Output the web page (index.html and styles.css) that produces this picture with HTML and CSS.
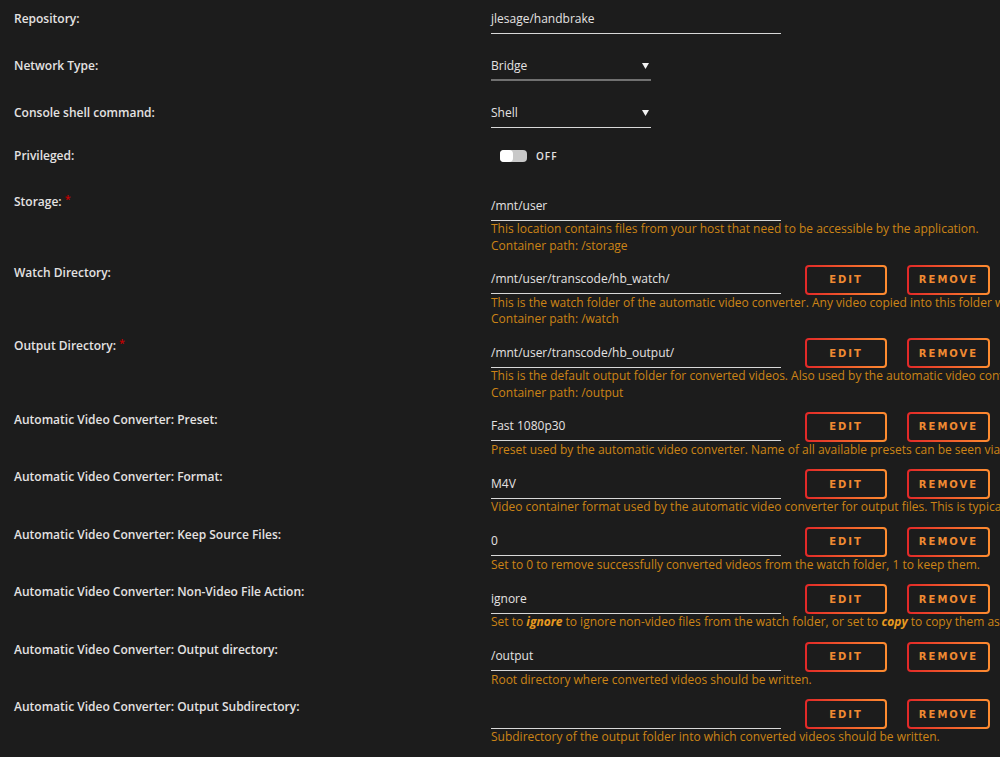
FILE: index.html
```html
<!DOCTYPE html>
<html lang="en">
<head>
    <meta charset="UTF-8">
    <title>Update Container</title>
    <link rel="stylesheet" href="styles.css">
</head>
<body>
    <div class="settings">
        <div class="row">
            <div class="label">Repository:</div>
            <div class="field"><div class="input">jlesage/handbrake</div></div>
        </div>

        <div class="row">
            <div class="label">Network Type:</div>
            <div class="field">
                <div class="select disabled">Bridge
                    <svg class="arrow" width="7" height="6" viewBox="0 0 7 6"><path d="M0 0H7L3.5 6Z" fill="#f2f2f2"/></svg>
                </div>
            </div>
        </div>

        <div class="row">
            <div class="label">Console shell command:</div>
            <div class="field">
                <div class="select">Shell
                    <svg class="arrow" width="7" height="6" viewBox="0 0 7 6"><path d="M0 0H7L3.5 6Z" fill="#f2f2f2"/></svg>
                </div>
            </div>
        </div>

        <div class="row short">
            <div class="label">Privileged:</div>
            <div class="field">
                <div class="switch"><span class="track"><span class="knob"></span></span><span class="state">OFF</span></div>
            </div>
        </div>

        <div class="row help multi storage">
            <div class="label">Storage: <span class="req">*</span></div>
            <div class="field">
                <div class="input">/mnt/user</div>
                <div class="desc">This location contains files from your host that need to be accessible by the application.<br>Container path: /storage</div>
            </div>
        </div>

        <div class="row help multi buttons">
            <div class="label">Watch Directory:</div>
            <div class="field">
                <div class="line">
                    <div class="input">/mnt/user/transcode/hb_watch/</div>
                    <button class="btn">Edit</button><button class="btn">Remove</button>
                </div>
                <div class="desc">This is the watch folder of the automatic video converter. Any video copied into this folder will be automatically converted.<br>Container path: /watch</div>
            </div>
        </div>

        <div class="row help multi buttons">
            <div class="label">Output Directory: <span class="req">*</span></div>
            <div class="field">
                <div class="line">
                    <div class="input">/mnt/user/transcode/hb_output/</div>
                    <button class="btn">Edit</button><button class="btn">Remove</button>
                </div>
                <div class="desc">This is the default output folder for converted videos. Also used by the automatic video converter.<br>Container path: /output</div>
            </div>
        </div>

        <div class="row help buttons">
            <div class="label">Automatic Video Converter: Preset:</div>
            <div class="field">
                <div class="line">
                    <div class="input">Fast 1080p30</div>
                    <button class="btn">Edit</button><button class="btn">Remove</button>
                </div>
                <div class="desc">Preset used by the automatic video converter. Name of all available presets can be seen via the web UI.</div>
            </div>
        </div>

        <div class="row help buttons">
            <div class="label">Automatic Video Converter: Format:</div>
            <div class="field">
                <div class="line">
                    <div class="input">M4V</div>
                    <button class="btn">Edit</button><button class="btn">Remove</button>
                </div>
                <div class="desc">Video container format used by the automatic video converter for output files. This is typically the extension.</div>
            </div>
        </div>

        <div class="row help buttons">
            <div class="label">Automatic Video Converter: Keep Source Files:</div>
            <div class="field">
                <div class="line">
                    <div class="input">0</div>
                    <button class="btn">Edit</button><button class="btn">Remove</button>
                </div>
                <div class="desc">Set to 0 to remove successfully converted videos from the watch folder, 1 to keep them.</div>
            </div>
        </div>

        <div class="row help buttons">
            <div class="label">Automatic Video Converter: Non-Video File Action:</div>
            <div class="field">
                <div class="line">
                    <div class="input">ignore</div>
                    <button class="btn">Edit</button><button class="btn">Remove</button>
                </div>
                <div class="desc">Set to <em>ignore</em> to ignore non-video files from the watch folder, or set to <em>copy</em> to copy them as-is to the output folder.</div>
            </div>
        </div>

        <div class="row help buttons">
            <div class="label">Automatic Video Converter: Output directory:</div>
            <div class="field">
                <div class="line">
                    <div class="input">/output</div>
                    <button class="btn">Edit</button><button class="btn">Remove</button>
                </div>
                <div class="desc">Root directory where converted videos should be written.</div>
            </div>
        </div>

        <div class="row help buttons">
            <div class="label">Automatic Video Converter: Output Subdirectory:</div>
            <div class="field">
                <div class="line">
                    <div class="input"></div>
                    <button class="btn">Edit</button><button class="btn">Remove</button>
                </div>
                <div class="desc">Subdirectory of the output folder into which converted videos should be written.</div>
            </div>
        </div>
    </div>
</body>
</html>
```

FILE: styles.css
```css
body {
    margin: 0;
    background-color: #1c1c1c;
    color: #e4e2e2;
    font-family: "Open Sans", sans-serif;
    font-size: 12px;
    overflow: hidden;
    white-space: nowrap;
}
.settings {
    padding: 5px 0 0 14px;
}
.row {
    display: grid;
    grid-template-columns: 477px 1fr;
    margin-bottom: 18px;
}
.row.short {
    margin-bottom: 26px;
}
.row.help {
    margin-bottom: 11px;
}
.row.help.multi {
    margin-bottom: 10.5px;
}
.row.storage {
    margin-bottom: 10px;
}
.label {
    font-weight: 600;
    line-height: 28px;
}
.row.short .label {
    line-height: 20px;
}
.row.storage .label {
    padding-top: 2px;
    line-height: 15px;
}
.row.buttons .label {
    line-height: 15px;
}
.req {
    position: relative;
    top: -3px;
    color: #c40000;
    font-size: 11px;
}
.input,
.select {
    width: 290px;
    height: 28px;
    line-height: 28px;
    border-bottom: 1px solid #d8d8d8;
    font-weight: 500;
}
.select {
    position: relative;
    width: 160px;
}
.select.disabled {
    border-bottom: 2px solid #707070;
    height: 27px;
}
.arrow {
    position: absolute;
    right: 2px;
    top: 11px;
}
.switch {
    display: flex;
    align-items: center;
    height: 20px;
    padding-left: 9px;
}
.track {
    display: block;
    width: 27px;
    height: 12px;
    border-radius: 4px;
    background: #c8c8c8;
}
.knob {
    display: block;
    width: 13px;
    height: 12px;
    border-radius: 4px;
    background: #ffffff;
}
.state {
    margin-left: 9px;
    font-size: 10px;
    font-weight: 600;
    letter-spacing: 1px;
}
.line {
    display: flex;
    align-items: center;
    height: 30px;
}
.btn {
    width: 82px;
    height: 30px;
    margin-left: 24px;
    padding: 0;
    border: 2px solid transparent;
    border-radius: 4px;
    background: linear-gradient(#1c1c1c, #1c1c1c) padding-box,
                linear-gradient(90deg, #e22828, #ff8d30) border-box;
    color: #f08a32;
    font-family: "DejaVu Sans", sans-serif;
    font-size: 10px;
    font-weight: bold;
    letter-spacing: 2px;
    text-transform: uppercase;
}
.btn + .btn {
    width: 83px;
    margin-left: 20px;
}
.desc {
    color: #cc8416;
    line-height: 16.5px;
}
.desc em {
    color: #e89a20;
    font-weight: bold;
}
```
